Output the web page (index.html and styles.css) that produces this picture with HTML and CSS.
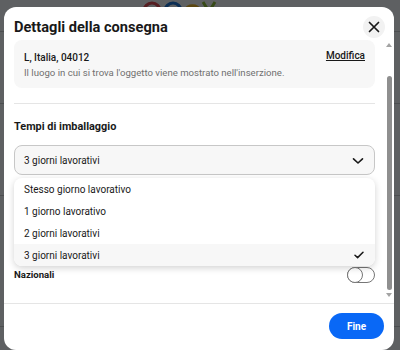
FILE: index.html
```html
<!DOCTYPE html>
<html lang="it">
<head>
<meta charset="utf-8">
<title>Dettagli della consegna</title>
<link rel="stylesheet" href="styles.css">
</head>
<body>
<div class="page">
  <svg class="logo" width="80" height="10" viewBox="0 0 80 10" aria-label="eBay">
    <path d="M4 11 A8 8 0 0 1 20 11" stroke="#e53238" stroke-width="3.2" fill="none"/>
    <path d="M25 11 A8 8 0 0 1 41 11" stroke="#0064d2" stroke-width="3.2" fill="none"/>
    <path d="M45 11 A8 8 0 0 1 60 11" stroke="#f5af02" stroke-width="3.2" fill="none"/>
    <path d="M63 2 L68 10 M75 2 L70 10" stroke="#86b817" stroke-width="3" fill="none"/>
  </svg>
  <div class="bg-line l1"></div>
  <div class="bg-line l2"></div>
  <div class="bg-line l3"></div>
  <div class="bg-line l4"></div>
</div>
<div class="overlay"></div>
<div class="modal">
  <div class="modal-head">
    <h2 class="title">Dettagli della consegna</h2>
    <button class="close" aria-label="Chiudi">
      <svg width="12" height="12" viewBox="0 0 12 12"><path d="M1.5 1.5 L10.5 10.5 M10.5 1.5 L1.5 10.5" stroke="#191919" stroke-width="1.7" stroke-linecap="round" fill="none"/></svg>
    </button>
  </div>
  <div class="modal-main">
    <div class="content">
      <div class="card">
        <div class="card-top">
          <span class="loc">L, Italia, 04012</span>
          <a class="edit" href="#">Modifica</a>
        </div>
        <div class="hint">Il luogo in cui si trova l'oggetto viene mostrato nell'inserzione.</div>
      </div>
      <div class="divider"></div>
      <h3 class="section">Tempi di imballaggio</h3>
      <div class="select-wrap">
        <div class="select">
          <span>3 giorni lavorativi</span>
          <svg class="chev" width="12" height="8" viewBox="0 0 12 8"><path d="M1.5 1.8 L6 6 L10.5 1.8" stroke="#191919" stroke-width="1.6" stroke-linecap="round" stroke-linejoin="round" fill="none"/></svg>
        </div>
        <ul class="menu">
          <li class="opt">Stesso giorno lavorativo</li>
          <li class="opt">1 giorno lavorativo</li>
          <li class="opt">2 giorni lavorativi</li>
          <li class="opt selected">3 giorni lavorativi
            <svg class="check" width="10" height="8" viewBox="0 0 10 8"><path d="M1 4.2 L3.6 6.6 L9 1.2" stroke="#191919" stroke-width="1.5" stroke-linecap="round" stroke-linejoin="round" fill="none"/></svg>
          </li>
        </ul>
      </div>
      <div class="row">
        <span class="row-label">Nazionali</span>
        <span class="toggle"><span class="knob"></span></span>
      </div>
    </div>
    <div class="scrollbar">
      <span class="arrow up"></span>
      <span class="thumb"></span>
      <span class="arrow down"></span>
    </div>
  </div>
  <div class="modal-foot">
    <button class="done">Fine</button>
  </div>
</div>
</body>
</html>
```
FILE: styles.css
```css
* { box-sizing: border-box; }
html, body { margin: 0; padding: 0; }
body {
  width: 400px;
  height: 350px;
  overflow: hidden;
  background: #ffffff;
  font-family: Roboto, "Noto Sans", sans-serif;
  color: #191919;
  position: relative;
}
.page {
  width: 400px;
  height: 350px;
  position: relative;
}
.logo {
  position: absolute;
  left: 140px;
  top: 0;
}
.bg-line {
  position: absolute;
  left: 0;
  width: 400px;
  height: 1px;
  background: #c8c8c8;
}
.l1 { top: 31px; }
.l2 { top: 103px; }
.l3 { top: 195px; }
.l4 { top: 326px; }
.overlay {
  position: absolute;
  inset: 0;
  background: rgba(17, 20, 24, 0.68);
}
.modal {
  position: absolute;
  left: 4px;
  top: 7px;
  width: 390px;
  height: 343px;
  background: #ffffff;
  border-radius: 12px;
  display: flex;
  flex-direction: column;
  overflow: hidden;
}
.modal-head {
  height: 33px;
  display: flex;
  align-items: center;
  padding: 7px 9px 0 10px;
  flex: none;
}
.title {
  margin: 0;
  font-size: 14.6px;
  font-weight: 700;
}
.close {
  margin-left: auto;
  width: 22px;
  height: 22px;
  border-radius: 50%;
  border: none;
  background: #f2f2f2;
  display: flex;
  align-items: center;
  justify-content: center;
  padding: 0;
}
.modal-main {
  height: 263px;
  flex: none;
  display: flex;
  position: relative;
  overflow: hidden;
}
.content {
  width: 371px;
  padding-left: 10px;
}
.card {
  height: 48px;
  background: #f7f7f7;
  border-radius: 8px;
  padding: 9px 10px 0 10px;
}
.card-top {
  display: flex;
  justify-content: space-between;
  align-items: center;
  height: 16px;
}
.loc {
  font-size: 10px;
  font-weight: 500;
}
.edit {
  font-size: 10px;
  font-weight: 500;
  color: #191919;
  text-decoration: underline;
  margin-top: -3px;
}
.hint {
  font-size: 9.6px;
  color: #707070;
  line-height: 15px;
}
.divider {
  height: 1px;
  background: #e5e5e5;
  margin-top: 15px;
}
.section {
  margin: 14px 0 0 0;
  font-size: 10.9px;
  font-weight: 700;
  line-height: 18px;
}
.select-wrap {
  position: relative;
  margin-top: 9px;
}
.select {
  height: 30px;
  border: 1px solid #c7c7c7;
  border-radius: 8px;
  background: #f7f7f7;
  display: flex;
  align-items: center;
  justify-content: space-between;
  padding: 0 10px 0 9px;
  font-size: 10px;
}
.chev { margin-top: 1px; }
.menu {
  position: absolute;
  left: 0;
  right: 0;
  top: 33px;
  margin: 0;
  padding: 0;
  list-style: none;
  background: #ffffff;
  border-radius: 8px;
  box-shadow: 0 2px 7px rgba(0, 0, 0, 0.18);
  overflow: hidden;
  z-index: 2;
}
.opt {
  height: 22px;
  display: flex;
  align-items: center;
  justify-content: space-between;
  padding: 0 11px 0 10px;
  font-size: 10px;
}
.opt.selected { background: #f7f7f7; }
.row {
  margin-top: 92px;
  height: 16px;
  display: flex;
  align-items: center;
  justify-content: space-between;
}
.row-label {
  font-size: 9.6px;
  font-weight: 700;
  margin-top: -1px;
}
.toggle {
  width: 28px;
  height: 16px;
  border: 1px solid #767676;
  border-radius: 8px;
  position: relative;
  display: block;
  background: #ffffff;
}
.knob {
  position: absolute;
  left: -1px;
  top: -1px;
  width: 16px;
  height: 16px;
  border: 1px solid #767676;
  border-radius: 50%;
  background: #ffffff;
}
.scrollbar {
  position: absolute;
  right: 1px;
  top: 0;
  bottom: 0;
  width: 8px;
  display: flex;
  flex-direction: column;
  align-items: center;
}
.arrow {
  width: 0;
  height: 0;
  border-left: 3px solid transparent;
  border-right: 3px solid transparent;
}
.arrow.up {
  border-bottom: 4px solid #a3a3a3;
  margin-top: 3px;
}
.arrow.down {
  border-top: 4px solid #a3a3a3;
  margin-top: 3px;
}
.thumb {
  width: 5px;
  height: 214px;
  margin-top: 29px;
  background: #8f8f8f;
  border-radius: 3px;
}
.modal-foot {
  flex: none;
  border-top: 1px solid #e5e5e5;
  height: 47px;
  display: flex;
  justify-content: flex-end;
  padding: 9px 10px 0 0;
}
.done {
  width: 55px;
  height: 26px;
  border: none;
  border-radius: 13px;
  background: #0968f6;
  color: #ffffff;
  font-family: Roboto, "Noto Sans", sans-serif;
  font-size: 10px;
  font-weight: 700;
  padding: 0;
}
```
